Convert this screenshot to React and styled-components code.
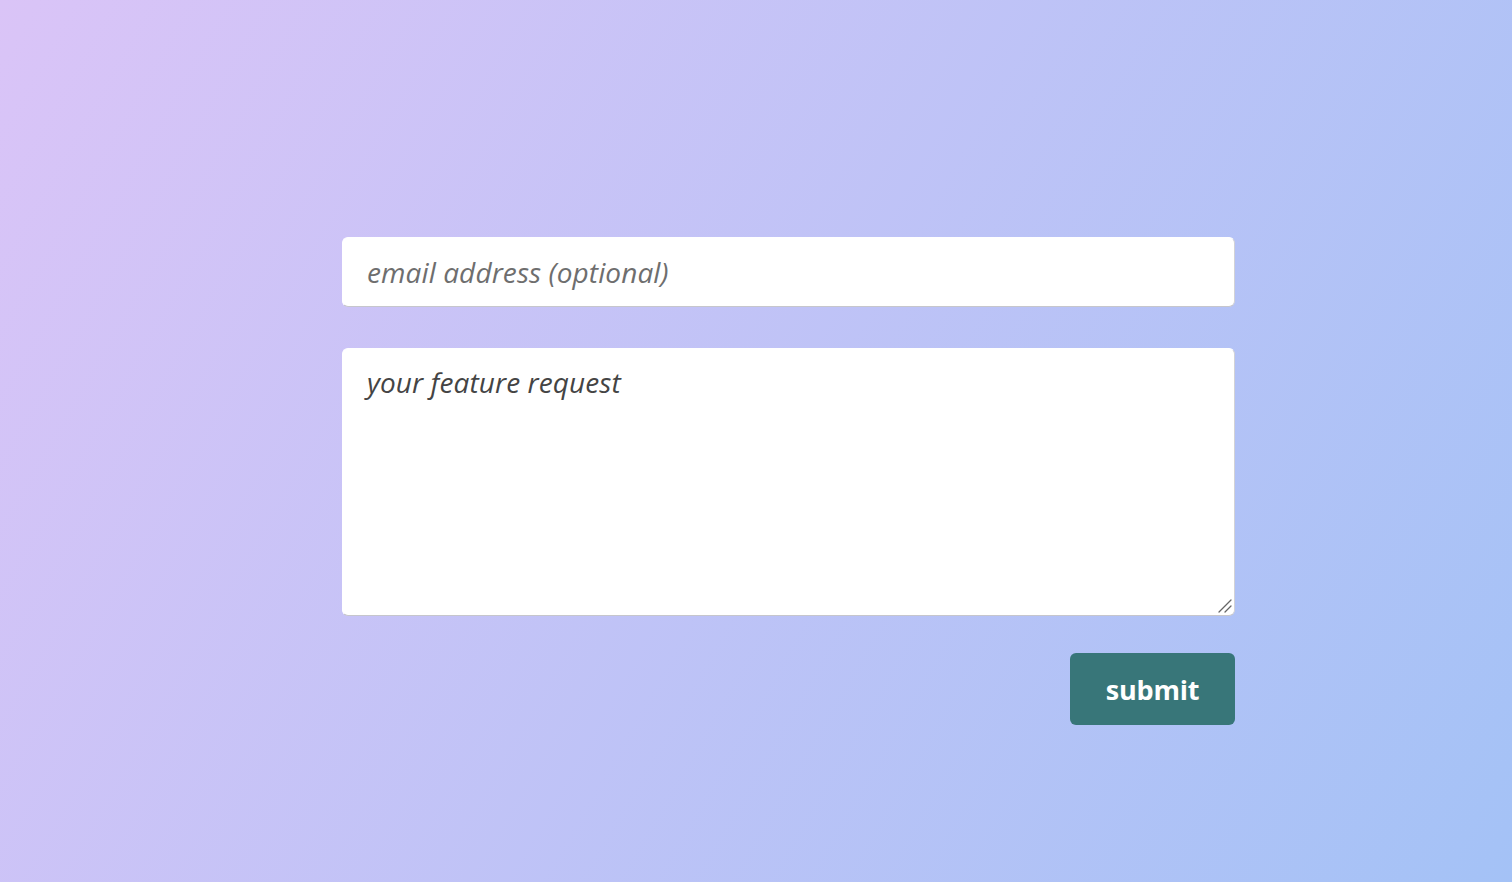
import React from "react";
import styled, { createGlobalStyle } from "styled-components";

const Global = createGlobalStyle`
  html, body { margin: 0; padding: 0; }
  body {
    min-height: 882px;
    background: linear-gradient(120deg, #dac4f7 0%, #a4c2f6 100%);
    background-attachment: fixed;
    font-family: "Open Sans", "Liberation Sans", sans-serif;
  }
`;

const Page = styled.main`
  min-height: 882px;
  box-sizing: border-box;
  padding: 237px 0 0 342px;
`;

const Form = styled.form`
  width: 893px;
  display: flex;
  flex-direction: column;
  gap: 41px;
`;

const fieldBase = `
  box-sizing: border-box;
  width: 100%;
  border: 1px solid #ffffff;
  border-right-color: #d2d2d6;
  border-bottom-color: #c6c6cc;
  border-radius: 6px;
  background: #ffffff;
  font-family: "Open Sans", "Liberation Sans", sans-serif;
  font-style: italic;
  font-size: 28px;
  color: #444;
  outline: none;
  letter-spacing: 0.1px;
`;

const Input = styled.input`
  ${fieldBase}
  height: 70px;
  padding: 0 24px;
  &::placeholder { color: #6e6e6e; }
`;

const AreaWrap = styled.div`
  position: relative;
  display: flex;
`;

const TextArea = styled.textarea`
  ${fieldBase}
  height: 268px;
  padding: 14px 24px;
  resize: none;
  &::placeholder { color: #444; }
`;

const Grip = styled.svg`
  position: absolute;
  right: 3px;
  bottom: 3px;
  width: 14px;
  height: 14px;
  pointer-events: none;
`;

const Actions = styled.div`
  display: flex;
  justify-content: flex-end;
  margin-top: -4px;
`;

const Submit = styled.button`
  width: 165px;
  height: 72px;
  border: none;
  border-radius: 6px;
  background: #387679;
  color: #fff;
  font-family: "Open Sans", "Liberation Sans", sans-serif;
  font-weight: 700;
  font-size: 27px;
  letter-spacing: -0.2px;
  cursor: pointer;
`;

export default function App() {
  return (
    <>
      <Global />
      <Page>
        <Form onSubmit={(e) => e.preventDefault()}>
          <Input type="email" placeholder="email address (optional)" />
          <AreaWrap>
            <TextArea placeholder="your feature request" />
            <Grip viewBox="0 0 14 14">
              <path d="M1 13 L13 1 M7 13 L13 7" stroke="#666" strokeWidth="1.3" strokeLinecap="round" />
            </Grip>
          </AreaWrap>
          <Actions>
            <Submit type="submit">submit</Submit>
          </Actions>
        </Form>
      </Page>
    </>
  );
}
